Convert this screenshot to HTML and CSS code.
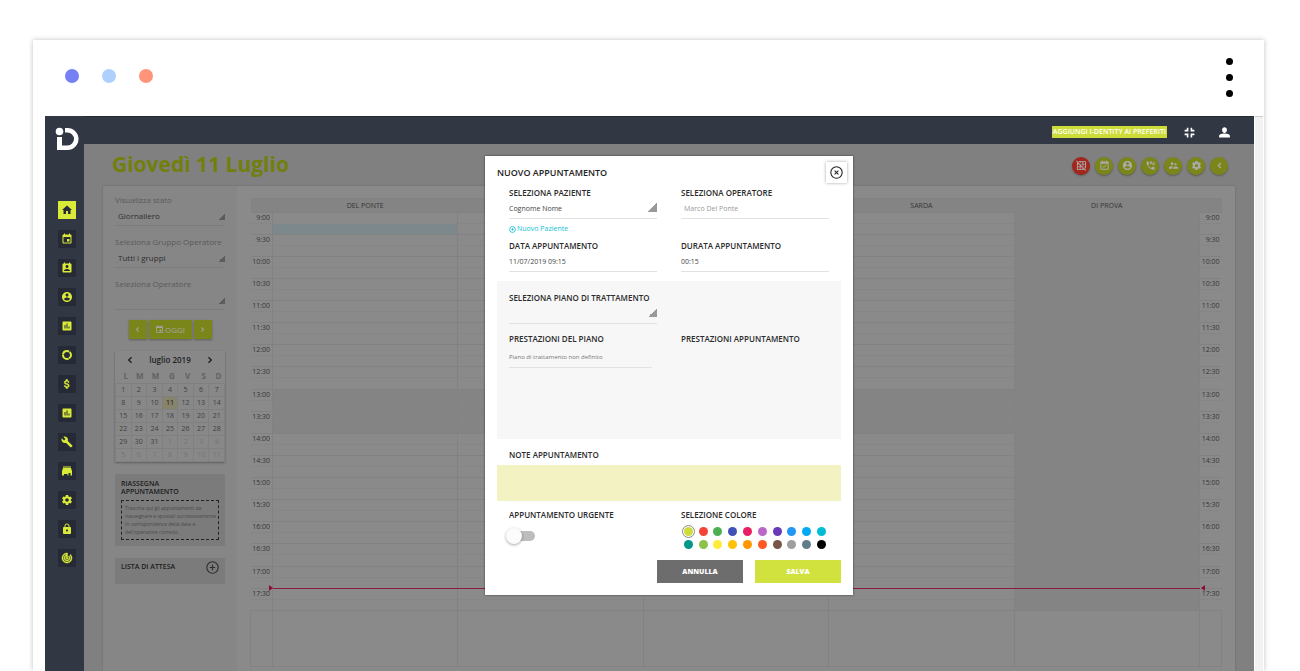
FILE: index.html
```
<!DOCTYPE html>
<html lang="it">
<head>
<meta charset="utf-8">
<title>Nuovo appuntamento</title>
<link rel="stylesheet" href="styles.css">
</head>
<body>
<svg class="sprite" aria-hidden="true">
  <symbol id="home" viewBox="0 0 24 24"><path d="M10 20v-6h4v6h5v-8h3L12 3 2 12h3v8z"/></symbol>
  <symbol id="event" viewBox="0 0 24 24"><path d="M17 12h-5v5h5v-5zM16 1v2H8V1H6v2H5c-1.11 0-1.99.9-1.99 2L3 19c0 1.1.89 2 2 2h14c1.1 0 2-.9 2-2V5c0-1.1-.9-2-2-2h-1V1h-2zm3 18H5V8h14v11z"/></symbol>
  <symbol id="contact" viewBox="0 0 24 24"><path d="M19 3h-1V1h-2v2H8V1H6v2H5c-1.11 0-2 .9-2 2v14c0 1.1.89 2 2 2h14c1.1 0 2-.9 2-2V5c0-1.1-.9-2-2-2zm-7 3c1.66 0 3 1.34 3 3s-1.34 3-3 3-3-1.34-3-3 1.34-3 3-3zm6 12H6v-1c0-2 4-3.1 6-3.1s6 1.1 6 3.1v1z"/></symbol>
  <symbol id="account" viewBox="0 0 24 24"><path d="M12 2C6.48 2 2 6.48 2 12s4.48 10 10 10 10-4.48 10-10S17.52 2 12 2zm0 3c1.66 0 3 1.34 3 3s-1.34 3-3 3-3-1.34-3-3 1.34-3 3-3zm0 14.2c-2.5 0-4.71-1.28-6-3.22.03-1.99 4-3.08 6-3.08 1.99 0 5.97 1.09 6 3.08-1.29 1.94-3.5 3.22-6 3.22z"/></symbol>
  <symbol id="chart" viewBox="0 0 24 24"><path d="M19 3H5c-1.1 0-2 .9-2 2v14c0 1.1.9 2 2 2h14c1.1 0 2-.9 2-2V5c0-1.1-.9-2-2-2zM9 17H7v-7h2v7zm4 0h-2V7h2v10zm4 0h-2v-4h2v4z"/></symbol>
  <symbol id="usage" viewBox="0 0 24 24"><circle cx="12" cy="12" r="8" fill="none" stroke="currentColor" stroke-width="4" stroke-dasharray="15.750 1" stroke-dashoffset="8"/></symbol>
  <symbol id="money" viewBox="0 0 24 24"><path stroke="currentColor" d="M11.8 10.9c-2.27-.59-3-1.2-3-2.15 0-1.09 1.01-1.85 2.7-1.85 1.78 0 2.44.85 2.5 2.1h2.21c-.07-1.72-1.12-3.3-3.21-3.81V3h-3v2.16c-1.94.42-3.5 1.68-3.5 3.61 0 2.31 1.91 3.46 4.7 4.13 2.5.6 3 1.48 3 2.41 0 .69-.49 1.79-2.7 1.79-2.06 0-2.87-.92-2.98-2.1h-2.2c.12 2.19 1.76 3.42 3.68 3.83V21h3v-2.15c1.95-.37 3.5-1.5 3.5-3.55 0-2.84-2.43-3.81-4.7-4.4z"/></symbol>
  <symbol id="build" viewBox="0 0 24 24"><path d="M22.7 19l-9.1-9.1c.9-2.3.4-5-1.5-6.9-2-2-5-2.4-7.4-1.3L9 6 6 9 1.6 4.7C.4 7.1.9 10.1 2.9 12.1c1.9 1.9 4.6 2.4 6.9 1.5l9.1 9.1c.4.4 1 .4 1.4 0l2.3-2.3c.5-.4.5-1.1.1-1.4z"/></symbol>
  <symbol id="store" viewBox="0 0 24 24"><path d="M4 3h16v2H4zM4 6h16l2 6v9h-3v-5h-4v5h-2v-3H6v3H2v-9z"/></symbol>
  <symbol id="settings" viewBox="0 0 24 24"><path d="M19.43 12.98c.04-.32.07-.64.07-.98s-.03-.66-.07-.98l2.11-1.65c.19-.15.24-.42.12-.64l-2-3.46c-.12-.22-.39-.3-.61-.22l-2.49 1c-.52-.4-1.08-.73-1.69-.98l-.38-2.65C14.46 2.18 14.25 2 14 2h-4c-.25 0-.46.18-.49.42l-.38 2.65c-.61.25-1.17.59-1.69.98l-2.49-1c-.23-.09-.49 0-.61.22l-2 3.46c-.13.22-.07.49.12.64l2.11 1.65c-.04.32-.07.65-.07.98s.03.66.07.98l-2.11 1.65c-.19.15-.24.42-.12.64l2 3.46c.12.22.39.3.61.22l2.49-1c.52.4 1.08.73 1.69.98l.38 2.65c.03.24.24.42.49.42h4c.25 0 .46-.18.49-.42l.38-2.65c.61-.25 1.17-.59 1.69-.98l2.49 1c.23.09.49 0 .61-.22l2-3.46c.12-.22.07-.49-.12-.64l-2.11-1.65zM12 15.5c-1.93 0-3.5-1.57-3.5-3.5s1.57-3.5 3.5-3.5 3.5 1.57 3.5 3.5-1.57 3.5-3.5 3.5z"/></symbol>
  <symbol id="lock" viewBox="0 0 24 24"><path d="M18 8h-1V6c0-2.76-2.24-5-5-5S7 3.24 7 6v2H6c-1.1 0-2 .9-2 2v10c0 1.1.9 2 2 2h12c1.1 0 2-.9 2-2V10c0-1.1-.9-2-2-2zm-6 9c-1.1 0-2-.9-2-2s.9-2 2-2 2 .9 2 2-.9 2-2 2zm3.1-9H8.9V6c0-1.71 1.39-3.1 3.1-3.1 1.71 0 3.1 1.39 3.1 3.1v2z"/></symbol>
  <symbol id="track" viewBox="0 0 24 24"><path stroke="currentColor" d="M19.07 4.93l-1.41 1.41C19.1 7.79 20 9.79 20 12c0 4.42-3.58 8-8 8s-8-3.58-8-8c0-4.08 3.05-7.44 7-7.93v2.02C8.16 6.57 6 9.03 6 12c0 3.31 2.69 6 6 6s6-2.69 6-6c0-1.66-.67-3.16-1.76-4.24l-1.41 1.41C15.55 9.9 16 10.9 16 12c0 2.21-1.79 4-4 4s-4-1.79-4-4c0-1.86 1.28-3.41 3-3.86v2.14c-.6.35-1 .98-1 1.72 0 1.1.9 2 2 2s2-.9 2-2c0-.74-.4-1.38-1-1.72V2h-1C6.48 2 2 6.48 2 12s4.48 10 10 10 10-4.48 10-10c0-2.76-1.12-5.26-2.93-7.07z"/></symbol>
  <symbol id="shrink" viewBox="0 0 24 24"><path d="M3 14h7v7H7v-4H3zM7 3h3v7H3V7h4zM14 14h7v3h-4v4h-3zM14 3h3v4h4v3h-7z"/></symbol>
  <symbol id="person" viewBox="0 0 24 24"><path d="M12 13c2.500 0 4.500-2.500 4.500-5.500S14.500 2.500 12 2.500 7.500 4.500 7.500 7.500 9.500 13 12 13zm0 1c-3 0-10 1.340-10 4v3h20v-3c0-2.660-7-4-10-4z"/></symbol>
  <symbol id="grid-off" viewBox="0 0 24 24"><path d="M8 4v1.45l2 2V4h4v4h-3.45l2 2H14v1.45l2 2V10h4v4h-3.45l2 2H20v1.45l2 2V4c0-1.1-.9-2-2-2H4.55l2 2H8zm8 0h4v4h-4V4zM1.27 1.27L0 2.55l2 2V20c0 1.1.9 2 2 2h15.46l2 2 1.27-1.27L1.27 1.27zM10 12.55L11.45 14H10v-1.45zm-6-6L5.45 8H4V6.55zM8 20H4v-4h4v4zm0-6H4v-4h3.45l.55.55V14zm6 6h-4v-4h3.45l.55.54V20zm2 0v-1.46L17.46 20H16z"/></symbol>
  <symbol id="event-ok" viewBox="0 0 24 24"><path d="M16.53 11.06L15.47 10l-4.88 4.88-2.12-2.12-1.06 1.06L10.59 17l5.94-5.94zM19 3h-1V1h-2v2H8V1H6v2H5c-1.11 0-1.99.9-1.99 2L3 19c0 1.1.89 2 2 2h14c1.1 0 2-.9 2-2V5c0-1.1-.9-2-2-2zm0 16H5V8h14v11z"/></symbol>
  <symbol id="phone" viewBox="0 0 24 24"><path d="M20 15.5c-1.25 0-2.45-.2-3.57-.57-.35-.11-.74-.03-1.02.24l-2.2 2.2c-2.83-1.44-5.15-3.75-6.59-6.58l2.2-2.21c.28-.27.36-.66.25-1.01C8.7 6.45 8.5 5.25 8.5 4c0-.55-.45-1-1-1H4c-.55 0-1 .45-1 1 0 9.39 7.61 17 17 17 .55 0 1-.45 1-1v-3.5c0-.55-.45-1-1-1zM11 3h5v2h-2l3 3 4-4 1 2-5 5-4-4v2h-2zM19 9h2v3h-2z"/></symbol>
  <symbol id="people" viewBox="0 0 24 24"><path d="M16.5 12c1.38 0 2.49-1.12 2.49-2.5S17.88 7 16.5 7C15.12 7 14 8.12 14 9.5s1.12 2.5 2.5 2.5zM9 11c1.66 0 2.99-1.34 2.99-3S10.66 5 9 5C7.34 5 6 6.34 6 8s1.34 3 3 3zm7.5 3c-1.83 0-5.5.92-5.5 2.75V19h11v-2.25c0-1.83-3.67-2.75-5.5-2.75zM9 13c-2.33 0-7 1.17-7 3.5V19h7v-2.25c0-.85.33-2.34 2.37-3.47C10.5 13.1 9.66 13 9 13z"/></symbol>
  <symbol id="left" viewBox="0 0 24 24"><path d="M15.410 7.410L14 6l-6 6 6 6 1.410-1.410L10.830 12z" stroke="currentColor"/></symbol>
  <symbol id="right" viewBox="0 0 24 24"><path d="M10 6L8.590 7.410 13.170 12l-4.580 4.590L10 18l6-6z" stroke="currentColor"/></symbol>
</svg>

<div class="frame">
  <header class="chrome">
    <div class="lights"><i class="light violet"></i><i class="light sky"></i><i class="light coral"></i></div>
    <div class="kebab"><i></i><i></i><i></i></div>
  </header>

  <div class="window">
    <div class="app">
      <nav class="rail" aria-label="Principale">
        <svg class="logo" viewBox="0 0 24 24" aria-label="iD"><circle cx="4.500" cy="4.500" r="3.800"/><path d="M2 10h5v8.500h5.500a6.500 6.500 0 0 0 0-13H10V1h2.500a11 11 0 0 1 0 22H2z"/></svg>
        <a class="rail-item active" href="#" aria-label="Home"><svg><use href="#home"/></svg></a>
        <a class="rail-item" href="#" aria-label="Agenda"><svg><use href="#event"/></svg></a>
        <a class="rail-item" href="#" aria-label="Pazienti"><svg><use href="#contact"/></svg></a>
        <a class="rail-item" href="#" aria-label="Account"><svg><use href="#account"/></svg></a>
        <a class="rail-item" href="#" aria-label="Report"><svg><use href="#chart"/></svg></a>
        <a class="rail-item" href="#" aria-label="Utilizzo"><svg><use href="#usage"/></svg></a>
        <a class="rail-item" href="#" aria-label="Pagamenti"><svg><use href="#money"/></svg></a>
        <a class="rail-item" href="#" aria-label="Statistiche"><svg><use href="#chart"/></svg></a>
        <a class="rail-item" href="#" aria-label="Strumenti"><svg><use href="#build"/></svg></a>
        <a class="rail-item" href="#" aria-label="Magazzino"><svg><use href="#store"/></svg></a>
        <a class="rail-item" href="#" aria-label="Impostazioni"><svg><use href="#settings"/></svg></a>
        <a class="rail-item" href="#" aria-label="Privacy"><svg><use href="#lock"/></svg></a>
        <a class="rail-item" href="#" aria-label="Obiettivi"><svg><use href="#track"/></svg></a>
      </nav>

      <div class="topbar">
        <a class="favourite" href="#">AGGIUNGI I-DENTITY AI PREFERITI</a>
        <button class="top-icon" aria-label="Riduci"><svg><use href="#shrink"/></svg></button>
        <button class="top-icon" aria-label="Profilo"><svg><use href="#person"/></svg></button>
      </div>

      <main class="main">
        <div class="heading">
          <h1>Giovedì 11 Luglio</h1>
          <div class="actions">
            <button class="round danger" aria-label="Nascondi griglia"><svg><use href="#grid-off"/></svg></button>
            <button class="round" aria-label="Disponibilità"><svg><use href="#event-ok"/></svg></button>
            <button class="round" aria-label="Paziente"><svg><use href="#account"/></svg></button>
            <button class="round" aria-label="Telefonate"><svg><use href="#phone"/></svg></button>
            <button class="round" aria-label="Operatori"><svg><use href="#people"/></svg></button>
            <button class="round" aria-label="Opzioni"><svg><use href="#settings"/></svg></button>
            <button class="round" aria-label="Indietro"><svg><use href="#left"/></svg></button>
          </div>
        </div>

        <div class="panel">
          <aside class="filters">
            <div class="filter"><label for="view">Visualizza stato</label><select id="view"><option>Giornaliero</option></select></div>
            <div class="filter"><label for="group">Seleziona Gruppo Operatore</label><select id="group"><option>Tutti i gruppi</option></select></div>
            <div class="filter"><label for="oper">Seleziona Operatore</label><select id="oper"><option></option></select></div>

            <div class="day-nav">
              <button aria-label="Giorno precedente"><svg><use href="#left"/></svg></button>
              <button class="today"><svg><use href="#event"/></svg>OGGI</button>
              <button aria-label="Giorno successivo"><svg><use href="#right"/></svg></button>
            </div>

            <div class="month">
              <div class="month-head">
                <button aria-label="Mese precedente"><svg><use href="#left"/></svg></button>
                <span>luglio 2019</span>
                <button aria-label="Mese successivo"><svg><use href="#right"/></svg></button>
              </div>
              <table>
                <thead><tr><th>L</th><th>M</th><th>M</th><th>G</th><th>V</th><th>S</th><th>D</th></tr></thead>
                <tbody>
                  <tr><td>1</td><td>2</td><td>3</td><td>4</td><td>5</td><td>6</td><td>7</td></tr>
                  <tr><td>8</td><td>9</td><td>10</td><td class="current">11</td><td>12</td><td>13</td><td>14</td></tr>
                  <tr><td>15</td><td>16</td><td>17</td><td>18</td><td>19</td><td>20</td><td>21</td></tr>
                  <tr><td>22</td><td>23</td><td>24</td><td>25</td><td>26</td><td>27</td><td>28</td></tr>
                  <tr><td>29</td><td>30</td><td>31</td><td class="next">1</td><td class="next">2</td><td class="next">3</td><td class="next">4</td></tr>
                  <tr><td class="next">5</td><td class="next">6</td><td class="next">7</td><td class="next">8</td><td class="next">9</td><td class="next">10</td><td class="next">11</td></tr>
                </tbody>
              </table>
            </div>

            <section class="card">
              <h2>RIASSEGNA<br>APPUNTAMENTO</h2>
              <p class="dropzone">Trascina qui gli appuntamenti da<br>riassegnare e spostali successivamente<br>in corrispondenza della data e<br>dell'operatore corretto</p>
            </section>
            <section class="card waiting">
              <h2>LISTA DI ATTESA</h2>
              <button aria-label="Aggiungi"><svg viewBox="0 0 24 24"><circle cx="12" cy="12" r="10.500"/><path d="M12 7v10M7 12h10"/></svg></button>
            </section>
          </aside>

          <div class="agenda">
            <table class="slots">
              <colgroup><col class="col-time"><col><col><col><col><col><col class="col-time"></colgroup>
              <thead><tr><th></th><th>DEL PONTE</th><th></th><th></th><th>SARDA</th><th>DI PROVA</th><th></th></tr></thead>
              <tbody>
                <tr><th>9:00</th><td class="picked"></td><td></td><td></td><td></td><td></td><th>9:00</th></tr>
                <tr><th>9:30</th><td></td><td></td><td></td><td></td><td></td><th>9:30</th></tr>
                <tr><th>10:00</th><td></td><td></td><td></td><td></td><td></td><th>10:00</th></tr>
                <tr><th>10:30</th><td></td><td></td><td></td><td></td><td></td><th>10:30</th></tr>
                <tr><th>11:00</th><td></td><td></td><td></td><td></td><td></td><th>11:00</th></tr>
                <tr><th>11:30</th><td></td><td></td><td></td><td></td><td></td><th>11:30</th></tr>
                <tr><th>12:00</th><td></td><td></td><td></td><td></td><td></td><th>12:00</th></tr>
                <tr><th>12:30</th><td></td><td></td><td></td><td></td><td></td><th>12:30</th></tr>
                <tr class="lunch"><th>13:00</th><td></td><td></td><td></td><td></td><td></td><th>13:00</th></tr>
                <tr class="lunch"><th>13:30</th><td></td><td></td><td></td><td></td><td></td><th>13:30</th></tr>
                <tr><th>14:00</th><td></td><td></td><td></td><td></td><td></td><th>14:00</th></tr>
                <tr><th>14:30</th><td></td><td></td><td></td><td></td><td></td><th>14:30</th></tr>
                <tr><th>15:00</th><td></td><td></td><td></td><td></td><td></td><th>15:00</th></tr>
                <tr><th>15:30</th><td></td><td></td><td></td><td></td><td></td><th>15:30</th></tr>
                <tr><th>16:00</th><td></td><td></td><td></td><td></td><td></td><th>16:00</th></tr>
                <tr><th>16:30</th><td></td><td></td><td></td><td></td><td></td><th>16:30</th></tr>
                <tr class="before-now"><th>17:00</th><td></td><td></td><td></td><td></td><td></td><th>17:00</th></tr>
                <tr class="now"><th>17:30</th><td></td><td></td><td></td><td></td><td></td><th>17:30</th></tr>
              </tbody>
              <tfoot><tr><td></td><td></td><td></td><td></td><td></td><td></td><td></td></tr></tfoot>
            </table>
          </div>
        </div>

        <form class="modal" role="dialog" aria-labelledby="modal-title">
          <div class="modal-head">
            <h2 id="modal-title">NUOVO APPUNTAMENTO</h2>
            <button class="close" type="button" aria-label="Chiudi"><svg viewBox="0 0 24 24"><circle cx="12" cy="12" r="10.500"/><path d="M8.500 8.500l7 7M15.500 8.500l-7 7"/></svg></button>
          </div>
          <div class="fields">
            <div class="field"><label for="patient">SELEZIONA PAZIENTE</label><select id="patient"><option>Cognome Nome</option></select></div>
            <div class="field"><label for="doctor">SELEZIONA OPERATORE</label><input id="doctor" class="muted" value="Marco Del Ponte"></div>
          </div>
          <a class="new-patient" href="#"><svg viewBox="0 0 24 24"><circle cx="12" cy="12" r="10"/><path d="M12 8v8M8 12h8"/></svg>Nuovo Paziente</a>
          <div class="fields">
            <div class="field"><label for="date">DATA APPUNTAMENTO</label><input id="date" value="11/07/2019 09:15"></div>
            <div class="field"><label for="duration">DURATA APPUNTAMENTO</label><input id="duration" value="00:15"></div>
          </div>
          <section class="plan">
            <div class="field"><label for="plan">SELEZIONA PIANO DI TRATTAMENTO</label><select id="plan"><option></option></select></div>
            <div class="services">
              <h3>PRESTAZIONI DEL PIANO</h3>
              <p>Piano di trattamento non definito</p>
            </div>
            <div class="services"><h3>PRESTAZIONI APPUNTAMENTO</h3></div>
          </section>
          <div class="notes">
            <label for="notes">NOTE APPUNTAMENTO</label>
            <textarea id="notes"></textarea>
          </div>
          <div class="fields options">
            <div>
              <label for="urgent">APPUNTAMENTO URGENTE</label>
              <input class="switch" type="checkbox" id="urgent">
            </div>
            <div role="radiogroup" aria-labelledby="colour-title">
              <h3 id="colour-title">SELEZIONE COLORE</h3>
              <div class="swatches">
                <input type="radio" name="c" aria-label="Lime" style="--c:#cddc39" checked>
                <input type="radio" name="c" aria-label="Rosso" style="--c:#f44336">
                <input type="radio" name="c" aria-label="Verde" style="--c:#4caf50">
                <input type="radio" name="c" aria-label="Indaco" style="--c:#3f51b5">
                <input type="radio" name="c" aria-label="Magenta" style="--c:#e91e63">
                <input type="radio" name="c" aria-label="Lilla" style="--c:#ba68c8">
                <input type="radio" name="c" aria-label="Viola" style="--c:#673ab7">
                <input type="radio" name="c" aria-label="Blu" style="--c:#2196f3">
                <input type="radio" name="c" aria-label="Azzurro" style="--c:#03a9f4">
                <input type="radio" name="c" aria-label="Ciano" style="--c:#00bcd4">
                <input type="radio" name="c" aria-label="Petrolio" style="--c:#009688">
                <input type="radio" name="c" aria-label="Verde chiaro" style="--c:#8bc34a">
                <input type="radio" name="c" aria-label="Giallo" style="--c:#ffeb3b">
                <input type="radio" name="c" aria-label="Ambra" style="--c:#ffc107">
                <input type="radio" name="c" aria-label="Arancione" style="--c:#ff9800">
                <input type="radio" name="c" aria-label="Arancione scuro" style="--c:#ff5722">
                <input type="radio" name="c" aria-label="Marrone" style="--c:#795548">
                <input type="radio" name="c" aria-label="Grigio" style="--c:#9e9e9e">
                <input type="radio" name="c" aria-label="Ardesia" style="--c:#607d8b">
                <input type="radio" name="c" aria-label="Nero" style="--c:#000000">
              </div>
            </div>
          </div>
          <div class="buttons">
            <button class="cancel" type="button">ANNULLA</button>
            <button class="save" type="submit">SALVA</button>
          </div>
        </form>
      </main>
    </div>
    <div class="scroll-track"></div>
  </div>
</div>
</body>
</html>
```
FILE: styles.css
```
* { box-sizing: border-box; }

body {
  margin: 0;
  height: 100vh;
  overflow: hidden;
  padding: 40px 36px 0 33px;
  display: flex;
  background: #fff;
  font: 8px/12px "Open Sans", sans-serif;
  color: #333;
}

h1, h2, h3, p { margin: 0; }

button, input, select, textarea {
  font: inherit;
  color: inherit;
  border: 0;
  border-radius: 0;
  padding: 0;
  margin: 0;
  background: none;
  appearance: none;
  outline: none;
}

svg { display: block; fill: currentColor; }
a { color: inherit; text-decoration: none; }
table { border-collapse: collapse; table-layout: fixed; width: 100%; }
th, td { padding: 0; font-weight: 400; }
.sprite { position: absolute; width: 0; height: 0; }

/* Browser frame */
.frame {
  flex: 1;
  display: flex;
  flex-direction: column;
  background: #fff;
  box-shadow: 0 0 5px rgba(0, 0, 0, .25);
}
.chrome {
  display: flex;
  justify-content: space-between;
  align-items: flex-start;
  height: 76px;
  padding: 18px 31px 0 32px;
}
.lights { display: flex; gap: 23px; padding-top: 11px; }
.light { width: 14px; height: 14px; border-radius: 50%; }
.violet { background: #7480f4; }
.sky { background: #afd0ff; }
.coral { background: #ff9478; }
.kebab { display: flex; flex-direction: column; gap: 9px; }
.kebab i { width: 7px; height: 7px; border-radius: 50%; background: #000; }

.window { flex: 1; min-height: 0; display: flex; padding: 0 1px 0 12px; }
.scroll-track { width: 8px; margin-left: 1px; background: #f2f2f2; border-top: 1px solid #ccc; }

.app {
  flex: 1;
  min-width: 0;
  display: grid;
  grid-template: 28px 1fr / 39px 1fr;
  background: #313743;
}

/* Navigation rail */
.rail {
  grid-row: 1 / 3;
  display: flex;
  flex-direction: column;
  align-items: center;
  gap: 11px;
  padding: 11px 0 0 4px;
  color: #d9ea38;
}
.logo { width: 24px; height: 24px; margin-bottom: 39px; color: #fff; }
.rail-item {
  display: grid;
  place-items: center;
  width: 18px;
  height: 18px;
  background: #252a36;
}
.rail-item svg { width: 12px; height: 12px; }
.rail-item.active { background: #d9ea38; color: #252a36; }

/* Top bar */
.topbar {
  display: flex;
  justify-content: flex-end;
  align-items: center;
  gap: 16px;
  padding: 3px 23px 0 0;
  border-top: 1px solid #262b36;
  color: #fff;
}
.favourite {
  padding: 0 1px;
  background: #cddc39;
  font-size: 7px;
  font-weight: 600;
}
.top-icon + .top-icon { margin-left: 6px; }
.top-icon svg { width: 13px; height: 13px; }

/* Day view */
.main {
  position: relative;
  min-height: 0;
  overflow: hidden;
  display: flex;
  flex-direction: column;
  background: #808080;
}
.heading {
  flex: none;
  display: flex;
  justify-content: space-between;
  align-items: center;
  height: 42px;
  padding: 0 26px 2px 28px;
}
h1 { color: #727f0c; font-size: 21px; line-height: 28px; font-weight: 700; }
.actions { display: flex; gap: 5px; padding-top: 3px; }
.round {
  display: grid;
  place-items: center;
  width: 18px;
  height: 18px;
  border-radius: 50%;
  background: #7b861a;
  color: #aaa;
  box-shadow: 0 1px 2px rgba(0, 0, 0, .3);
}
.round svg { width: 11px; height: 11px; }
.danger { background: #a3251c; }

.panel {
  flex: 1;
  min-height: 0;
  display: flex;
  margin: 0 19px;
  background: #8a8a8a;
  box-shadow: 0 0 2px rgba(0, 0, 0, .2);
}
.filters { flex: none; width: 134px; padding: 8px 12px 0; background: #868686; }
.filter { margin-bottom: 10px; }
.filter label { display: block; color: #5a5a5a; }
.filter select {
  display: block;
  width: 100%;
  height: 20px;
  padding: 0 4px 0 3px;
  border-bottom: 1px solid #7b7b7b;
  color: #2f2f2f;
}

select { background: linear-gradient(135deg, transparent 50%, #999 50%) no-repeat right 40% / 9px 9px; }
.filter select { background: linear-gradient(135deg, transparent 50%, #5c5c5c 50%) no-repeat right 60% / 7px 7px; }

.day-nav { display: flex; justify-content: center; gap: 2px; margin-top: 2px; }
.day-nav button {
  display: flex;
  align-items: center;
  justify-content: center;
  width: 18px;
  height: 19px;
  background: #7b861a;
  color: #a5a5a5;
  box-shadow: 0 1px 2px rgba(0, 0, 0, .3);
}
.day-nav .today { width: 43px; gap: 1px; }
.day-nav svg { width: 9px; height: 9px; }

.month { margin-top: 12px; box-shadow: 0 1px 2px rgba(0, 0, 0, .3); background: #888; }
.month-head {
  display: flex;
  justify-content: space-between;
  align-items: center;
  height: 18px;
  padding: 0 9px;
  color: #1f1f1f;
  font-weight: 600;
}
.month-head svg { width: 12px; height: 12px; }
.month th { height: 14px; padding-right: 3px; text-align: right; font-weight: 700; color: #626262; }
.month td {
  height: 13px;
  border: 1px solid #808080;
  text-align: center;
  font-size: 7px;
  line-height: 12px;
  color: #3f3f3f;
}
.month .current { background: #88846c; color: #111; }
.month .next { color: #757575; }

.card { margin-top: 12px; padding: 6px; background: #7b7b7b; color: #1c1c1c; }
.card h2 { font-size: 7px; line-height: 8px; font-weight: 600; }
.dropzone {
  margin-top: 4px;
  padding: 3px;
  border: 1px dashed #222;
  font-size: 5px;
  line-height: 8px;
  white-space: nowrap;
  color: #4a4a4a;
}
.waiting { display: flex; justify-content: space-between; align-items: center; padding: 3px 6px 10px; }
.waiting svg { width: 13px; height: 13px; fill: none; stroke: #2c2c2c; stroke-width: 2; }

/* Time grid */
.agenda { flex: 1; padding: 12px 13px 0; }
.slots td, .slots th { border: 1px solid #828282; color: #363636; }
.col-time { width: 22px; }
.slots thead th { height: 14px; background: #848484; line-height: 12px; font-size: 7px; border-width: 1px 0; }
.slots tbody tr { height: 22px; }
.slots tbody tr:nth-child(8n) { height: 23px; }
.slots tbody th {
  border-width: 1px 0;
  vertical-align: top;
  text-align: right;
  padding-right: 2px;
  font-size: 7px;
  line-height: 10px;
}
.slots tbody td, .slots tbody th { background: linear-gradient(#868686, #868686) no-repeat 0 10px / 100% 1px; }
.slots tbody td:nth-child(6), .slots .lunch td { background-color: #848484; }
.slots tbody td.picked { background: linear-gradient(#7c888b, #7c888b) no-repeat 0 11px / 100% 11px; }
.slots tfoot tr { height: 56px; }
.slots .before-now td { border-bottom-color: #8c1c3c; }
.slots .now td { border-top-color: #8c1c3c; }
.now th { position: relative; }
.now th::after {
  content: "";
  position: absolute;
  top: -4px;
  right: -1px;
  border: 3px solid transparent;
  border-left: 4px solid #8c0c34;
  border-right: 0;
}
.now th:last-child::after { right: auto; left: 1px; border-left: 0; border-right: 4px solid #8c0c34; }

/* Appointment dialog */
.modal {
  position: absolute;
  top: 12px;
  left: 0;
  right: 0;
  width: 368px;
  margin: 0 auto;
  padding: 6px 12px 12px;
  background: #fff;
  box-shadow: 0 0 2px rgba(0, 0, 0, .6);
}
.modal label, .modal h3 {
  display: block;
  font-size: 8px;
  line-height: 12px;
  font-weight: 600;
  white-space: nowrap;
  color: #2b2b2b;
}
.modal-head { display: flex; justify-content: space-between; height: 25px; }
.modal-head h2 { font-size: 9px; line-height: 22px; font-weight: 600; color: #222; }
.close {
  display: grid;
  place-items: center;
  width: 21px;
  height: 21px;
  margin-right: -6px;
  box-shadow: 0 0 3px rgba(0, 0, 0, .35);
}
.close svg { width: 13px; height: 13px; fill: none; stroke: #222; stroke-width: 2; }
.fields { display: grid; grid-template-columns: 1fr 1fr; gap: 24px; padding: 0 12px; }
.field input, .field select {
  display: block;
  width: 100%;
  height: 20px;
  border-bottom: 1px solid #e2e2e2;
  font-size: 7px;
  color: #444;
}
.field .muted { padding-left: 3px; color: #999; }
.new-patient {
  display: flex;
  align-items: center;
  gap: 1px;
  margin: 4px 12px 5px;
  font-size: 7px;
  color: #13c1d6;
}
.new-patient svg { width: 7px; height: 7px; fill: none; stroke: currentColor; stroke-width: 3; }
.plan {
  display: grid;
  grid-template-columns: 1fr 1fr;
  grid-template-rows: auto 1fr;
  gap: 9px 24px;
  min-height: 158px;
  margin-top: 9px;
  padding: 11px 12px;
  background: #f7f7f7;
}
.plan .field { grid-column: 1; }
.services { grid-row: 2; }
.services p {
  margin: 3px 5px 0 0;
  border-bottom: 1px solid #e2e2e2;
  font-size: 6px;
  line-height: 19px;
  color: #777;
}
.notes { padding-top: 10px; }
.notes label { margin: 0 12px 4px; }
.notes textarea { display: block; width: 100%; height: 36px; resize: none; background: #f3f2c2; }
.options { padding-top: 8px; }
.switch {
  position: relative;
  display: block;
  width: 26px;
  height: 10px;
  margin-top: 10px;
  border-radius: 5px;
  background: #bdbdbd;
}
.switch::before {
  content: "";
  position: absolute;
  top: -3px;
  left: -3px;
  width: 16px;
  height: 16px;
  border-radius: 50%;
  background: #fcfcfc;
  box-shadow: 0 1px 3px rgba(0, 0, 0, .35);
}
.swatches {
  display: grid;
  grid-template-columns: repeat(10, 1fr);
  grid-auto-rows: 13px;
  place-items: center;
  padding-top: 4px;
}
.swatches input { width: 9px; height: 9px; border-radius: 50%; background: var(--c); }
.swatches input:checked { outline: 1px solid #888; outline-offset: 1px; }
.buttons { display: flex; justify-content: flex-end; gap: 12px; padding-top: 9px; }
.buttons button { width: 86px; height: 23px; color: #fff; font-size: 7px; font-weight: 800; }
.cancel { background: #6d6d6d; }
.save { background: #d1e23e; }
```
